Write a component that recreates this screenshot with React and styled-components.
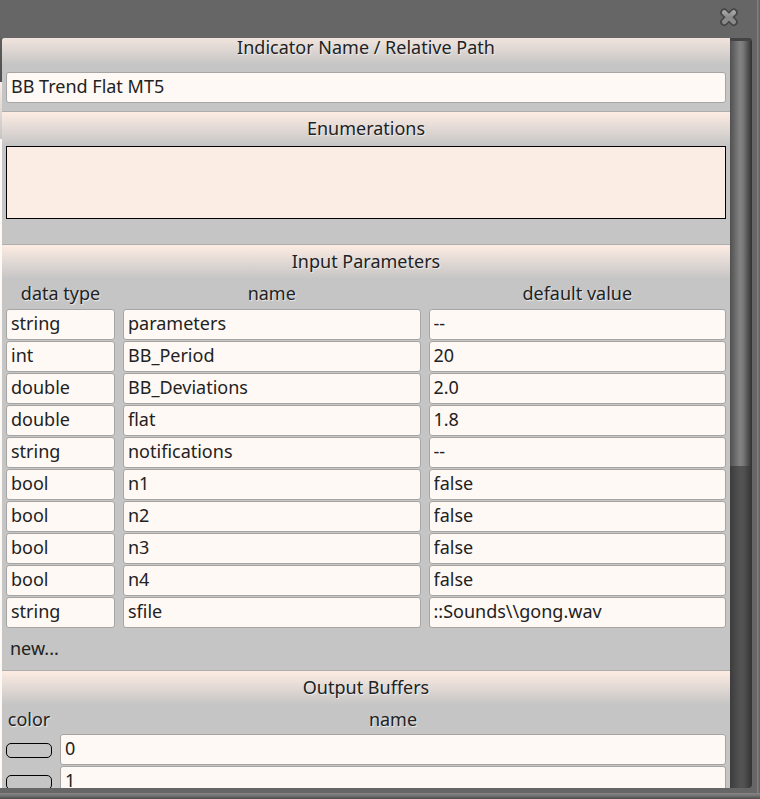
import React from "react";
import styled, { createGlobalStyle } from "styled-components";

const parameters = [
  { type: "string", name: "parameters", value: "--" },
  { type: "int", name: "BB_Period", value: "20" },
  { type: "double", name: "BB_Deviations", value: "2.0" },
  { type: "double", name: "flat", value: "1.8" },
  { type: "string", name: "notifications", value: "--" },
  { type: "bool", name: "n1", value: "false" },
  { type: "bool", name: "n2", value: "false" },
  { type: "bool", name: "n3", value: "false" },
  { type: "bool", name: "n4", value: "false" },
  { type: "string", name: "sfile", value: "::Sounds\\\\gong.wav" },
];

const buffers = ["0", "1"];

const GlobalStyle = createGlobalStyle`
  * {
    box-sizing: border-box;
  }

  body {
    margin: 0;
    background: #666;
    color: #222;
    font: 18px/24px "Noto Sans", sans-serif;
  }
`;

const Frame = styled.div`
  height: 100vh;
  padding: 0 3px 6px 0;
  overflow: hidden;
  background:
    linear-gradient(to right, #858585, #5c5c5c) right top / 3px calc(100% - 6px) no-repeat,
    linear-gradient(#858585, #757575 40%, #4c4c4c) bottom / 100% 6px no-repeat;
`;

const Dialog = styled.div`
  height: 100%;
  display: flex;
  flex-direction: column;
  padding: 0 5px 5px 0;
  background: #666;
  border-radius: 0 4px 5px 0;
`;

const TitleBar = styled.header`
  flex: none;
  height: 38px;
  display: flex;
  justify-content: flex-end;
  align-items: center;
  padding: 0 13px 4px;
`;

const CloseButton = styled.button`
  display: flex;
  padding: 0;
  border: 0;
  background: none;
  cursor: pointer;
`;

const Body = styled.div`
  flex: 1;
  min-height: 0;
  display: flex;
  padding-left: 2px;
  background:
    linear-gradient(#5c5c5c, #505050) left top / 2px 44px no-repeat,
    linear-gradient(#fff9f5, #fff9f5) left 101px / 2px 100% no-repeat,
    linear-gradient(#666 44px, #fcece3 44px, #c5c5c5 101px) left top / 2px 101px no-repeat;
`;

const Viewport = styled.main`
  flex: 1;
  min-width: 0;
  overflow: hidden;
  background: #c5c5c5;
  border-radius: 3px 0 0 0;
`;

/* scrolled down slightly, so the first heading is partly hidden */
const Content = styled.form`
  margin-top: -8px;
`;

const Section = styled.section`
  display: flow-root;
  padding-bottom: ${(props) => props.$bottom || 0}px;
`;

const Heading = styled.h2`
  height: 35px;
  margin: 0;
  padding-top: 7px;
  border-top: 1px solid #adadad;
  background: linear-gradient(#fdece3, #c5c5c5 34px);
  font-size: 18px;
  font-weight: normal;
  line-height: 18px;
  text-align: center;
  text-shadow: 1px 1px 1px #eee;
`;

const Single = styled.div`
  padding: 7px 4px 0;
`;

const TextField = styled.input`
  display: block;
  width: 100%;
  height: 31px;
  padding: 0 4px 3px;
  border: 1px solid #a5a5a5;
  border-radius: 3px;
  outline: 0;
  background: #fff9f5;
  color: #222;
  font: inherit;
`;

const Enumerations = styled.textarea`
  display: block;
  width: calc(100% - 8px);
  height: 73px;
  margin: 0 4px;
  padding: 4px;
  border: 1px solid #000;
  border-radius: 0;
  outline: 0;
  resize: none;
  background: #fbede3;
  font: inherit;
`;

const Table = styled.table`
  width: 100%;
  table-layout: fixed;
  border-spacing: 0;
`;

const Label = styled.th`
  width: ${(props) => props.$width || "auto"};
  height: ${(props) => props.$height || 30}px;
  padding: 0 4px 2px;
  font-weight: normal;
  text-shadow: 1px 1px 1px #eee;
`;

const Cell = styled.td`
  padding: 0 4px 1px;
`;

const NewButton = styled.button`
  display: block;
  height: 41px;
  padding: 0 8px 3px;
  border: 0;
  background: none;
  color: #222;
  font: inherit;
  cursor: pointer;
`;

const Swatch = styled.button`
  display: block;
  width: 46px;
  height: 15px;
  margin-top: 2px;
  padding: 0;
  border: 1px solid #000;
  border-radius: 5px;
  background: transparent;
`;

const Track = styled.div`
  flex: none;
  width: 22px;
  overflow: hidden;
  border-radius: 0 4px 4px 0;
  background: linear-gradient(to right, #3c3c3c, #535353 45%, #505050 65%, #333);
`;

const Thumb = styled.div`
  height: 57%;
  border-top: 3px solid #444;
  background: linear-gradient(to right, #505050, #828282 45%, #787878 60%, #303030);
`;

const CloseIcon = () => (
  <svg width="20" height="20" viewBox="0 0 20 20" fill="none" strokeLinecap="round">
    <defs>
      <linearGradient id="metal" x1="0" y1="2" x2="0" y2="18" gradientUnits="userSpaceOnUse">
        <stop offset="0" stopColor="#b4b4b4" />
        <stop offset="0.5" stopColor="#8a8a8a" />
        <stop offset="1" stopColor="#8a8a8a" />
      </linearGradient>
    </defs>
    <path d="M5.2 5.5 14.8 15M14.8 5.5 5.2 15" stroke="#454545" strokeWidth="8" />
    <path d="M5.2 5.5 14.8 15M14.8 5.5 5.2 15" stroke="url(#metal)" strokeWidth="4.6" />
  </svg>
);

const App = () => {
  return (
    <Frame>
      <GlobalStyle />
      <Dialog>
        <TitleBar>
          <CloseButton type="button" aria-label="Close">
            <CloseIcon />
          </CloseButton>
        </TitleBar>
        <Body>
          <Viewport>
            <Content onSubmit={(e) => e.preventDefault()}>
              <Section $bottom={8}>
                <Heading id="path">Indicator Name / Relative Path</Heading>
                <Single>
                  <TextField aria-labelledby="path" defaultValue="BB Trend Flat MT5" />
                </Single>
              </Section>

              <Section $bottom={25}>
                <Heading id="enums">Enumerations</Heading>
                <Enumerations aria-labelledby="enums" />
              </Section>

              <Section>
                <Heading>Input Parameters</Heading>
                <Table>
                  <thead>
                    <tr>
                      <Label id="type" $width="117px">data type</Label>
                      <Label id="name">name</Label>
                      <Label id="value">default value</Label>
                    </tr>
                  </thead>
                  <tbody>
                    {parameters.map((param) => (
                      <tr key={param.name}>
                        <Cell>
                          <TextField aria-labelledby="type" defaultValue={param.type} />
                        </Cell>
                        <Cell>
                          <TextField aria-labelledby="name" defaultValue={param.name} />
                        </Cell>
                        <Cell>
                          <TextField aria-labelledby="value" defaultValue={param.value} />
                        </Cell>
                      </tr>
                    ))}
                  </tbody>
                </Table>
                <NewButton type="button">new...</NewButton>
              </Section>

              <Section>
                <Heading>Output Buffers</Heading>
                <Table>
                  <thead>
                    <tr>
                      <Label id="color" $width="54px" $height={29}>color</Label>
                      <Label id="buffer" $height={29}>name</Label>
                    </tr>
                  </thead>
                  <tbody>
                    {buffers.map((buffer) => (
                      <tr key={buffer}>
                        <Cell>
                          <Swatch type="button" aria-labelledby="color" />
                        </Cell>
                        <Cell>
                          <TextField aria-labelledby="buffer" defaultValue={buffer} />
                        </Cell>
                      </tr>
                    ))}
                  </tbody>
                </Table>
              </Section>
            </Content>
          </Viewport>
          <Track>
            <Thumb />
          </Track>
        </Body>
      </Dialog>
    </Frame>
  );
};

export default App;
